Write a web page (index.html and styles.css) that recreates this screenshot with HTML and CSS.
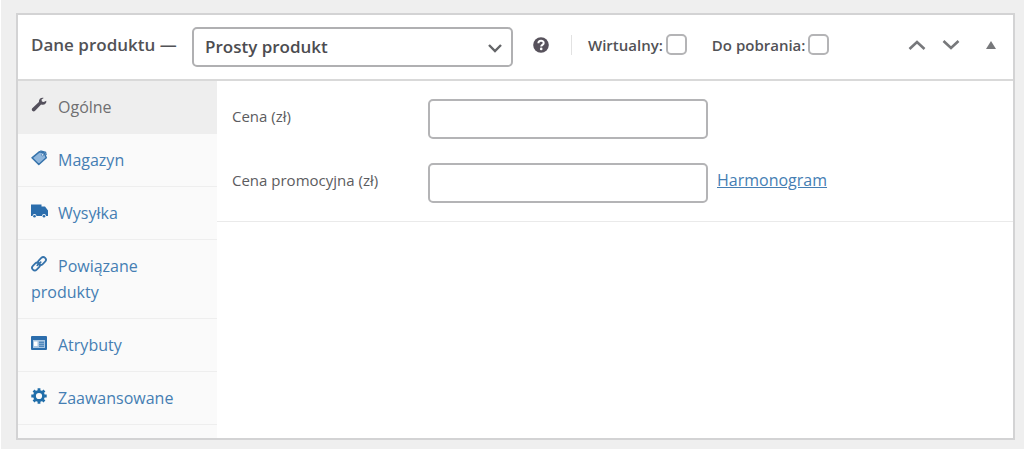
FILE: index.html
```
<!DOCTYPE html>
<html lang="pl">
<head>
  <meta charset="UTF-8">
  <title>Dane produktu</title>
  <link rel="stylesheet" href="styles.css">
</head>
<body>
  <main class="wrap">
    <section class="postbox">
      <header class="postbox-header">
        <label class="title" for="product-type">Dane produktu —</label>
        <div class="select-wrap">
          <select id="product-type">
            <option>Prosty produkt</option>
          </select>
          <svg class="select-arrow" width="16" height="10" viewBox="0 0 16 10"><path d="M2 2l6 6 6-6" fill="none" stroke="#646568" stroke-width="2.4"/></svg>
        </div>
        <svg class="help-tip" width="16" height="16" viewBox="0 0 16 16"><circle cx="8" cy="8" r="7.800" fill="#57525c"/><path d="M5.4 6.2C5.4 3 10.7 3 10.7 6c0 1.800-2.500 1.900-2.500 3.500" fill="none" stroke="#fff" stroke-width="2"/><circle cx="8.200" cy="11.900" r="1.300" fill="#fff"/></svg>
        <div class="type-options">
          <div class="option">
            <label for="virtual">Wirtualny:</label>
            <input type="checkbox" id="virtual">
          </div>
          <div class="option">
            <label for="downloadable">Do pobrania:</label>
            <input type="checkbox" id="downloadable">
          </div>
        </div>
        <div class="handle-actions">
          <button type="button" aria-label="Przenieś w górę"><svg width="18" height="12" viewBox="0 0 18 12"><path d="M1.500 10L9 3l7.500 7" fill="none" stroke="#77787b" stroke-width="2.600"/></svg></button>
          <button type="button" aria-label="Przenieś w dół"><svg width="18" height="12" viewBox="0 0 18 12"><path d="M1.500 2L9 9l7.500-7" fill="none" stroke="#77787b" stroke-width="2.600"/></svg></button>
          <button type="button" class="toggle" aria-label="Przełącz panel"><svg width="10" height="12" viewBox="0 0 10 12"><path d="M5 2l5 8H0z" fill="#77787b"/></svg></button>
        </div>
      </header>

      <div class="panel-wrap">
        <ul class="tabs">
          <li class="active">
            <a href="#general"><svg class="icon" viewBox="0 0 16 16"><path d="M15.300 3.800l-2.600 1.300-1.800-.7-.4-1.900L12.700.9C10.300.2 7.700 1.800 7.900 5L1.300 11.300c-1.600 1.900.9 4.200 2.800 2.500l6-6.300c3.200.9 5.800-.9 5.200-3.700z" fill="#54505c"/></svg>Ogólne</a>
          </li>
          <li>
            <a href="#inventory"><svg class="icon" viewBox="0 0 16 16"><path d="M1 7.800L8.300 1.800l4.800 1 2.200 5L7.800 14.500z" fill="#8fb6dc" stroke="#3673ab" stroke-width="1.500" stroke-linejoin="round"/><path d="M9.300.8l5.300 1.400.6 3" fill="none" stroke="#3673ab" stroke-width="1.200"/><circle cx="11.600" cy="4.800" r="1.100" fill="#fff" stroke="#3673ab" stroke-width=".7"/></svg>Magazyn</a>
          </li>
          <li>
            <a href="#shipping"><svg class="icon" viewBox="0 0 16 16"><path d="M0 1.500h10.500v2h3.500l3 4V13h-2a2 2 0 0 0-4 0h-5.500a2 2 0 0 0-4 0H0z" fill="#2b6dac"/><circle cx="3.500" cy="13.300" r="1.300" fill="#2b6dac"/><circle cx="13" cy="13.300" r="1.300" fill="#2b6dac"/></svg>Wysyłka</a>
          </li>
          <li>
            <a href="#linked"><svg class="icon" viewBox="0 0 16 16"><g fill="none" stroke="#3673ab" stroke-width="1.800" stroke-linecap="round"><rect x="-4.400" y="-2.700" width="8.800" height="5.400" rx="2.700" transform="translate(5 10.500) rotate(-45)"/><rect x="-4.400" y="-2.700" width="8.800" height="5.400" rx="2.700" transform="translate(11 5) rotate(-45)"/><path d="M6.300 9.400l3.400-3.300"/></g></svg>Powiązane produkty</a>
          </li>
          <li>
            <a href="#attributes"><svg class="icon" viewBox="0 0 16 16"><rect y="1" width="16" height="14" rx="1" fill="#2b6dac"/><path d="M2 5h12v8H2z" fill="#a9c6e2"/><path d="M3 6.500h3.500V11H3z" fill="#fff"/><path d="M8 7.200h5M8 9.200h5M8 11.200h5" stroke="#2b6dac" stroke-width="1"/></svg>Atrybuty</a>
          </li>
          <li>
            <a href="#advanced"><svg class="icon" viewBox="0 0 16 16"><circle cx="8" cy="8" r="4.500" fill="none" stroke="#1f6da9" stroke-width="2.800"/><path d="M8 .3v2.500M8 13.200v2.500M.3 8h2.500M13.200 8h2.500M2.600 2.600l1.700 1.700M11.700 11.700l1.700 1.700M13.400 2.600l-1.700 1.700M4.300 11.700l-1.700 1.700" stroke="#1f6da9" stroke-width="2.800"/></svg>Zaawansowane</a>
          </li>
        </ul>

        <div class="panel" id="general">
          <div class="options-group">
            <div class="form-field">
              <label for="regular-price">Cena (zł)</label>
              <input type="text" id="regular-price">
            </div>
            <div class="form-field">
              <label for="sale-price">Cena promocyjna (zł)</label>
              <input type="text" id="sale-price">
              <a href="#schedule">Harmonogram</a>
            </div>
          </div>
        </div>
      </div>
    </section>
  </main>
</body>
</html>
```

FILE: styles.css
```
* {
  box-sizing: border-box;
}
body {
  margin: 0;
  background: #fff;
  color: #5c5c60;
  font-family: "Segoe UI", "Open Sans", "Noto Sans", sans-serif;
  font-size: 16px;
}
a {
  color: #457eb3;
}
.wrap {
  margin-left: 1px;
  padding: 13px 9px 9px 15px;
  background: #efefef;
}
.postbox {
  border: 2px solid #d3d3d4;
  background: #fff;
}
.postbox-header {
  display: flex;
  align-items: center;
  height: 66px;
  padding: 0 17px 5px 13px;
  border-bottom: 2px solid #d9d9d9;
  color: #525256;
  font-weight: 600;
}
.title {
  width: 161px;
  font-size: 17px;
  white-space: nowrap;
}
.select-wrap {
  position: relative;
  width: 321px;
  margin-top: 5px;
}
select {
  width: 100%;
  height: 40px;
  padding: 0 36px 2px 11px;
  border: 2px solid #b0b0b2;
  border-radius: 5px;
  background: #fff;
  color: #4c4c50;
  font: inherit;
  font-size: 17px;
  appearance: none;
}
.select-arrow {
  position: absolute;
  top: 16px;
  right: 10px;
  pointer-events: none;
}
.help-tip {
  margin: 0 22px 0 20px;
}
.type-options {
  display: flex;
  align-items: center;
  gap: 25px;
  height: 20px;
  padding-left: 16px;
  border-left: 1px solid #e2e2e2;
  font-size: 15px;
  white-space: nowrap;
}
.option {
  display: flex;
  align-items: center;
  gap: 3px;
}
input {
  margin: 0;
  border: 2px solid #b4b4b6;
  border-radius: 5px;
  background: #fff;
  appearance: none;
}
input[type="checkbox"] {
  width: 21px;
  height: 21px;
}
.handle-actions {
  display: flex;
  align-items: center;
  gap: 16px;
  margin-left: auto;
}
.handle-actions button {
  display: flex;
  padding: 0;
  border: 0;
  background: none;
  cursor: pointer;
}
.handle-actions .toggle {
  margin-left: 10px;
}
.panel-wrap {
  display: flex;
}
.tabs {
  flex: none;
  width: 199px;
  margin: 0;
  padding: 0 0 13px;
  background: #fafafa;
  list-style: none;
}
.tabs a {
  display: block;
  padding: 13px;
  border-bottom: 1px solid #eee;
  line-height: 26px;
  text-decoration: none;
}
.tabs .active a {
  background: #eee;
  color: #6f6f71;
}
.icon {
  width: 16px;
  height: 16px;
  margin-right: 11px;
  overflow: visible;
}
.panel {
  flex: 1;
}
.options-group {
  display: grid;
  gap: 24px;
  padding: 18px 15px;
  border-bottom: 1px solid #eaeaea;
}
.form-field {
  display: flex;
  align-items: center;
}
.form-field label {
  width: 196px;
  padding-bottom: 6px;
  font-size: 15px;
}
.form-field input {
  width: 280px;
  height: 40px;
  margin-right: 9px;
}
.form-field a {
  padding-bottom: 6px;
}
```
